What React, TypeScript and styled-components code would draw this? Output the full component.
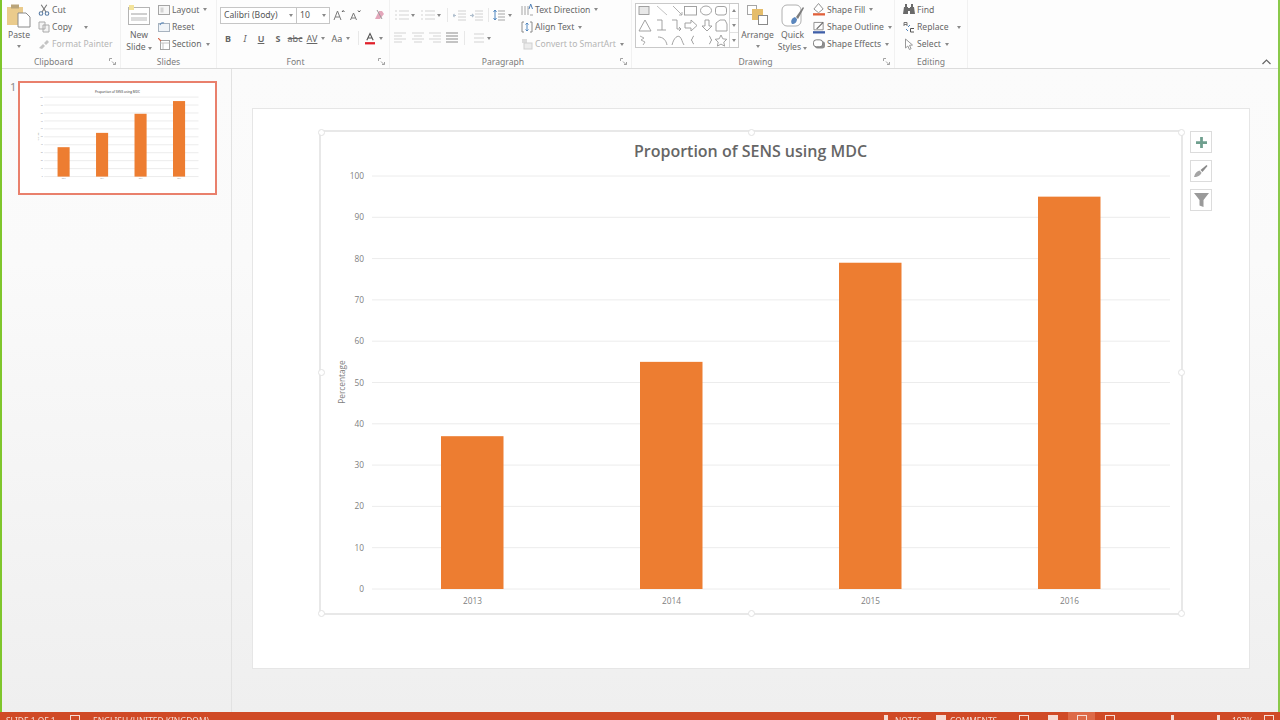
import React from "react";
import styled, { createGlobalStyle } from "styled-components";

const uiFont = '"Noto Sans", "Open Sans", sans-serif';

const GlobalStyle = createGlobalStyle`
  html, body {
    margin: 0;
    padding: 0;
    width: 1280px;
    height: 720px;
    overflow: hidden;
    background: #fff;
  }
  * { box-sizing: border-box; }
`;

const Shell = styled.div`
  width: 1280px;
  height: 720px;
  display: flex;
  flex-direction: column;
  overflow: hidden;
  font-family: ${uiFont};
  filter: blur(0.5px);
`;

const Framed = styled.div`
  height: 712px;
  display: flex;
  flex-direction: column;
  border-left: 2px solid #7fc62c;
  border-right: 2px solid #8ac94a;
`;

/* ---------- ribbon ---------- */

const Ribbon = styled.div`
  height: 69px;
  display: flex;
  flex: none;
  background: #fdfdfd;
  border-bottom: 1px solid #dcdcdc;
`;

const Group = styled.div<{ $w: number }>`
  width: ${(p) => p.$w}px;
  height: 68px;
  flex: none;
  display: flex;
  flex-direction: column;
  border-right: 1px solid #f1f1f1;
`;

const GroupBody = styled.div<{ $pl: number }>`
  height: 55px;
  display: flex;
  padding: 1px 0 0 ${(p) => p.$pl}px;
`;

const GroupLabel = styled.div`
  height: 13px;
  display: flex;
  align-items: center;
  font-size: 8.6px;
  color: #7b7b7b;
`;

const LabelText = styled.span`
  flex: 1;
  text-align: center;
`;

const Launcher = styled.svg`
  width: 7px;
  height: 7px;
  margin: 0 4px;
  flex: none;
`;

const RibbonTail = styled.div`
  flex: 1;
  display: flex;
  align-items: flex-end;
  justify-content: flex-end;
  padding: 0 7px 3px 0;
`;

const BigButton = styled.div<{ $w?: number }>`
  width: ${(p) => p.$w ?? 28}px;
  flex: none;
  display: flex;
  flex-direction: column;
  align-items: center;
  font-size: 8.6px;
  line-height: 12px;
  color: #666;
`;

const BigIcon = styled.div`
  height: 28px;
  display: flex;
  align-items: center;
  justify-content: center;
`;

const SmallStack = styled.div<{ $ml: number }>`
  margin-left: ${(p) => p.$ml}px;
  display: flex;
  flex-direction: column;
`;

const SmallRow = styled.div<{ $off?: boolean }>`
  height: 17.4px;
  display: flex;
  align-items: center;
  gap: 2px;
  font-size: 8.6px;
  white-space: nowrap;
  color: ${(p) => (p.$off ? "#b4b4b4" : "#666")};
`;

const SmallIcon = styled.span`
  width: 12px;
  height: 12px;
  flex: none;
  display: flex;
  align-items: center;
  justify-content: center;
`;

const Caret = styled.span<{ $ml?: number; $up?: boolean; $drop?: boolean }>`
  display: inline-block;
  flex: none;
  width: 0;
  height: 0;
  margin-left: ${(p) => p.$ml ?? 2}px;
  margin-top: ${(p) => (p.$drop ? 4 : 0)}px;
  border-left: 2.5px solid transparent;
  border-right: 2.5px solid transparent;
  border-top: 3px solid #8a8a8a;
  transform: ${(p) => (p.$up ? "rotate(180deg)" : "none")};
`;

const ToolRows = styled.div<{ $w?: number }>`
  ${(p) => (p.$w ? `width: ${p.$w}px;` : "")}
  flex: none;
  padding-top: 5px;
  display: flex;
  flex-direction: column;
  gap: 5px;
`;

const ToolRow = styled.div`
  height: 18px;
  display: flex;
  align-items: center;
`;

const ToolCell = styled.span<{ $w: number; $ml?: number; $weight?: number; $italic?: boolean; $under?: boolean; $strike?: boolean }>`
  width: ${(p) => p.$w}px;
  margin-left: ${(p) => p.$ml ?? 0}px;
  flex: none;
  display: flex;
  align-items: center;
  justify-content: center;
  font-size: 9px;
  font-weight: ${(p) => p.$weight ?? 400};
  font-style: ${(p) => (p.$italic ? "italic" : "normal")};
  text-decoration: ${(p) => (p.$under ? "underline" : p.$strike ? "line-through" : "none")};
  color: #666;
  white-space: nowrap;
`;

const Separator = styled.span<{ $ml: number }>`
  width: 1px;
  height: 14px;
  margin-left: ${(p) => p.$ml}px;
  flex: none;
  background: #e8e8e8;
`;

const ComboBox = styled.div<{ $w: number }>`
  width: ${(p) => p.$w}px;
  height: 17px;
  flex: none;
  display: flex;
  align-items: center;
  justify-content: space-between;
  padding: 0 3px;
  margin-right: -1px;
  background: #fff;
  border: 1px solid #c6c6c6;
  font-size: 8.6px;
  color: #555;
  white-space: nowrap;
`;

const Gallery = styled.div`
  width: 104px;
  height: 45px;
  margin: 2px 1px 0 0;
  flex: none;
  display: flex;
  background: #fff;
  border: 1px solid #c9c9c9;
`;

const GalleryScroll = styled.div`
  width: 9px;
  flex: none;
  display: flex;
  flex-direction: column;
  border-left: 1px solid #d6d6d6;
`;

const GalleryStep = styled.div`
  flex: 1;
  display: flex;
  align-items: center;
  justify-content: center;
  border-bottom: 1px solid #e2e2e2;
  &:last-child { border-bottom: 0; }
`;

/* ---------- workspace ---------- */

const Workspace = styled.div`
  flex: 1;
  display: flex;
  min-height: 0;
  background: linear-gradient(#fbfbfb, #fafafa 30%, #efefef);
`;

const SlidePanel = styled.div`
  width: 230px;
  flex: none;
  display: flex;
  align-items: flex-start;
  gap: 2px;
  padding: 12px 0 0 8px;
  border-right: 1px solid #e2e2e2;
`;

const SlideNumber = styled.span`
  width: 6px;
  font-size: 11px;
  line-height: 12px;
  color: #8e8e8e;
`;

const Thumb = styled.div`
  width: 199px;
  height: 114px;
  flex: none;
  background: #fff;
  border: 2px solid #e9806c;
  padding: 1px;
`;

const ThumbSvg = styled.svg`
  display: block;
  width: 100%;
  height: 100%;
`;

const Editor = styled.div`
  flex: 1;
  padding: 39px 28px 43px 20px;
  display: flex;
`;

const Slide = styled.div`
  flex: 1;
  display: flex;
  align-items: flex-start;
  gap: 7px;
  padding: 21px 0 0 66px;
  background: #fff;
  border: 1px solid #e6e6e6;
`;

const ChartFrame = styled.div`
  position: relative;
  width: 864px;
  height: 485px;
  flex: none;
  border: 2px solid #e8e8e8;
`;

const ChartSvg = styled.svg`
  display: block;
  width: 860px;
  height: 481px;
`;

const Handle = styled.span<{ $x: string; $y: string }>`
  position: absolute;
  left: ${(p) => p.$x};
  top: ${(p) => p.$y};
  width: 7px;
  height: 7px;
  margin: -3.5px 0 0 -3.5px;
  background: #fff;
  border: 1px solid #e2e2e2;
  border-radius: 50%;
`;

const ChartTools = styled.div`
  margin-top: 1px;
  display: flex;
  flex-direction: column;
  gap: 7px;
`;

const ChartTool = styled.div`
  width: 22px;
  height: 22px;
  display: flex;
  align-items: center;
  justify-content: center;
  background: #fff;
  border: 1px solid #dcdcdc;
`;

const ChartTitle = styled.text`
  font-family: "Open Sans", sans-serif;
  font-size: 16px;
  font-weight: 600;
  fill: #666;
  text-anchor: middle;
`;

const AxisText = styled.text<{ $anchor: string }>`
  font-family: "Open Sans", sans-serif;
  font-size: 8.3px;
  fill: #808080;
  text-anchor: ${(p) => p.$anchor};
`;

const GridLine = styled.line`
  stroke: #ececec;
  stroke-width: 1;
  vector-effect: non-scaling-stroke;
`;

const Bar = styled.rect`
  fill: #ed7d31;
`;

/* ---------- status bar ---------- */

const StatusBar = styled.div`
  height: 8px;
  flex: none;
  display: flex;
  overflow: hidden;
  background: #d04a26;
  padding-left: 6px;
`;

const StatusText = styled.span<{ $w: number; $ml?: number }>`
  width: ${(p) => p.$w}px;
  margin-left: ${(p) => p.$ml ?? 0}px;
  flex: none;
  padding-top: 3px;
  font-size: 8.4px;
  line-height: 11px;
  color: #f6dcd4;
  white-space: nowrap;
`;

const StatusBlock = styled.span<{ $w: number; $ml: number; $solid?: boolean }>`
  width: ${(p) => p.$w}px;
  height: 6px;
  margin: 3px 0 0 ${(p) => p.$ml}px;
  flex: none;
  background: ${(p) => (p.$solid ? "#f6dcd4" : "transparent")};
  border: 1px solid #f6dcd4;
`;

const StatusSpacer = styled.span<{ $w?: number }>`
  flex: ${(p) => (p.$w ? `0 0 ${p.$w}px` : "1")};
`;

const ActiveView = styled.span<{ $ml: number }>`
  width: 27px;
  margin-left: ${(p) => p.$ml}px;
  flex: none;
  display: flex;
  justify-content: center;
  background: #dd6a48;
`;

/* ---------- drawings ---------- */

const Launch = () => (
  <Launcher viewBox="0 0 7 7">
    <path d="M.5 3V.5H3M3 3.5l3 3M6.5 4v2.5H4" fill="none" stroke="#999" strokeWidth=".9" />
  </Launcher>
);

const PasteIcon = () => (
  <svg width="24" height="25" viewBox="0 0 24 25">
    <rect x="0" y="4" width="16" height="18" fill="#eacb8c" />
    <rect x="4" y="1.500" width="8" height="4" fill="#b9a47a" />
    <path d="M11 10h8l4 4v10H11z" fill="#fff" stroke="#8a8a8a" />
  </svg>
);

const CutIcon = () => (
  <svg width="12" height="12" viewBox="0 0 12 12" fill="none" stroke="#5a7da6" strokeWidth="1.1">
    <circle cx="3" cy="9.500" r="1.800" />
    <circle cx="9" cy="9.500" r="1.800" />
    <path d="M4 8 8.800.8M8 8 3.200.8" stroke="#777" />
  </svg>
);

const CopyIcon = () => (
  <svg width="12" height="12" viewBox="0 0 12 12" fill="#f4f4f4" stroke="#aaa">
    <path d="M1 1h6v7H1zM5 4h6v7H5z" />
  </svg>
);

const PainterIcon = () => (
  <svg width="12" height="12" viewBox="0 0 12 12">
    <path d="M1 10 5 6l2 2-3 3zM6 5l3-3 2 2-3 3z" fill="#c4c4c4" />
  </svg>
);

const NewSlideIcon = () => (
  <svg width="22" height="20" viewBox="0 0 22 20">
    <rect x=".5" y="2.500" width="21" height="17" fill="#fff" stroke="#b4b4b4" />
    <rect x="3" y="8" width="16" height="2" fill="#cfcfcf" />
    <rect x="3" y="12" width="16" height="4" fill="#dcdcdc" />
    <path d="M1 0h5v5H1z" fill="#f3e39a" />
  </svg>
);

const LayoutIcon = () => (
  <svg width="12" height="12" viewBox="0 0 12 12">
    <rect x=".5" y="1.500" width="11" height="9" fill="#f6f6f6" stroke="#a5a5a5" />
    <rect x="2.500" y="3.500" width="3" height="5" fill="#d4d4d4" />
  </svg>
);

const ResetIcon = () => (
  <svg width="12" height="12" viewBox="0 0 12 12">
    <rect x=".5" y="2.500" width="11" height="8" fill="#f0f4f8" stroke="#a8b3bf" />
    <path d="M2 4a3 3 0 0 1 4-2" fill="none" stroke="#6a92bd" strokeWidth="1.200" />
  </svg>
);

const SectionIcon = () => (
  <svg width="12" height="12" viewBox="0 0 12 12">
    <rect x="2.500" y="2.500" width="9" height="9" fill="#fff" stroke="#a5a5a5" />
    <path d="M2.500 5h9M5 5v6" stroke="#c4c4c4" />
    <path d="M0 0l3 3" stroke="#d5694d" strokeWidth="1.200" />
  </svg>
);

const ListIcon = ({ dots = true }: { dots?: boolean }) => (
  <svg width="14" height="12" viewBox="0 0 14 12" stroke="#d4d4d4" strokeWidth="1.200">
    {dots && <path d="M0 2h2M0 6h2M0 10h2" />}
    <path d="M4 2h10M4 6h10M4 10h10" />
  </svg>
);

const IndentIcon = ({ flip }: { flip?: boolean }) => (
  <svg width="13" height="11" viewBox="0 0 13 11" stroke="#d2d2d2" strokeWidth="1.100" fill="none">
    <path d="M5 1h8M5 4h8M5 7h8M5 10h8" />
    <path d={flip ? "M0 5.500h3M2 4l1.500 1.500L2 7" : "M3 5.500H0M1.500 4 0 5.500 1.500 7"} stroke="#b0bfce" />
  </svg>
);

const SpacingIcon = () => (
  <svg width="12" height="12" viewBox="0 0 12 12" fill="none">
    <path d="M2 1v10M.5 3 2 1l1.500 2M.5 9 2 11l1.500-2" stroke="#4f86c0" />
    <path d="M5 2h7M5 5h7M5 8h7M5 11h7" stroke="#a5a5a5" />
  </svg>
);

const AlignIcon = ({ kind }: { kind: "l" | "c" | "r" | "j" }) => {
  const tone = kind === "j" ? "#8c8c8c" : "#d4d4d4";
  const short = { l: "M0 4h8M0 10h8", c: "M2 4h8M2 10h8", r: "M4 4h8M4 10h8", j: "M0 4h12M0 10h12" }[kind];
  return (
    <svg width="12" height="12" viewBox="0 0 12 12" stroke={tone} strokeWidth="1.100">
      <path d={`M0 1h12M0 7h12${short}`} />
    </svg>
  );
};

const TextDirectionIcon = () => (
  <svg width="12" height="13" viewBox="0 0 12 13" fill="none">
    <path d="M1 3v9M4 3v9M7 3v9" stroke="#a5a5a5" />
    <path d="M8 6l1.700-5L11.500 6" stroke="#4f7fb5" />
    <path d="M9 12h3" stroke="#a5a5a5" />
  </svg>
);

const AlignTextIcon = () => (
  <svg width="12" height="12" viewBox="0 0 12 12" fill="none">
    <path d="M3 1H1v10h2M9 1h2v10H9" stroke="#8c8c8c" />
    <path d="M6 2v8M4.500 3.500 6 2l1.500 1.500M4.500 8.500 6 10l1.500-1.500" stroke="#4f86c0" />
  </svg>
);

const SmartArtIcon = () => (
  <svg width="12" height="12" viewBox="0 0 12 12">
    <rect x="1" y="1" width="5" height="4" fill="#dcdcdc" />
    <rect x="3" y="5" width="8" height="6" fill="#ececec" stroke="#d0d0d0" />
  </svg>
);

const ShapeGallery = () => (
  <svg width="93" height="43" viewBox="0 0 93 43" fill="none" stroke="#999" strokeWidth=".9">
    <rect x="3" y="2.500" width="10" height="8" fill="#e8e8e8" />
    <path d="M21 2l10 9" stroke="#bcbcbc" />
    <path d="M37 2l9 9M43 11h3V8" stroke="#a8a8a8" />
    <rect x="48.500" y="2.500" width="12" height="8.500" />
    <ellipse cx="70" cy="6.500" rx="5.500" ry="4.500" />
    <rect x="79.500" y="2.500" width="11" height="8.500" rx="2.500" />
    <path d="M3 27 9 16l6 11zM21 16h5v10M21 26h9M36 16h5v9h4M43 23l2 2-2 2" />
    <path d="M49 19h6v-3l6 5.500-6 5.500v-3h-6zM69 16h4v6h3l-5 5-5-5h3zM80 27v-8l4-3h5l2 4v7z" />
    <path d="M4 32l4 2-3 2 4 2-2 3" stroke="#a5a5a5" />
    <path d="M22 33c5 0 8 3 9 8M36 41c2-8 6-10 8-8s2 5 4 8M58 32c-2 0-1 4-3 4 2 0 1 4 3 4M73 32c2 0 1 4 3 4-2 0-1 4-3 4" />
    <path d="M85 31l1.800 3.800 4 .5-3 2.800.8 4-3.600-2-3.600 2 .8-4-3-2.800 4-.5z" />
  </svg>
);

const ArrangeIcon = () => (
  <svg width="21" height="20" viewBox="0 0 21 20">
    <rect x=".5" y=".5" width="9" height="9" fill="#fff" stroke="#a5a5a5" />
    <rect x="5" y="4" width="11" height="11" fill="#e5bd6a" />
    <rect x="11.500" y="10.500" width="9" height="9" fill="#fff" stroke="#8a8a8a" />
  </svg>
);

const QuickStylesIcon = () => (
  <svg width="24" height="24" viewBox="0 0 24 24" fill="none">
    <rect x="1" y="2" width="19" height="21" rx="5" fill="#fff" stroke="#b0b0b0" />
    <path d="M11 21c-2-3 0-6 3-7l2 2c0 3-2 5-5 5z" fill="#5a86bd" />
    <path d="M15 14 22 4l1 1-6 11z" fill="#7d7d7d" />
  </svg>
);

const ShapeFillIcon = () => (
  <svg width="13" height="13" viewBox="0 0 13 13">
    <path d="M6 0 11 6 6 10 1 6z" fill="#fff" stroke="#8a8a8a" />
    <rect x="0" y="10.500" width="13" height="2.500" fill="#e0603a" />
  </svg>
);

const ShapeOutlineIcon = () => (
  <svg width="13" height="13" viewBox="0 0 13 13" fill="none">
    <path d="M1 1h10v8H1z" stroke="#8a8a8a" />
    <path d="M4 8l7-7" stroke="#666" strokeWidth="1.300" />
    <rect x="0" y="10.500" width="13" height="2.500" fill="#3f5fa8" />
  </svg>
);

const ShapeEffectsIcon = () => (
  <svg width="13" height="12" viewBox="0 0 13 12">
    <rect x="2" y="3" width="11" height="8" rx="3" fill="#8f8f8f" />
    <rect x=".5" y="1.500" width="10" height="7.500" rx="3" fill="#fff" stroke="#777" />
  </svg>
);

const FindIcon = () => (
  <svg width="12" height="11" viewBox="0 0 12 11" fill="#6a6a6a">
    <path d="M1 3h4v7H0zM7 3h4l1 7H7zM5 4h2v3H5zM2 0h2v3H2zM8 0h2v3H8z" />
  </svg>
);

const ReplaceIcon = () => (
  <svg width="12" height="12" viewBox="0 0 12 12" fill="none" stroke="#777">
    <path d="M1 5V1.500h3V5M1 3.500h3" />
    <path d="M11 7.500H7.500v3.500H11" stroke="#555" />
    <path d="M5 6 7 4M3 8l2 2" stroke="#4f86c0" />
  </svg>
);

const SelectIcon = () => (
  <svg width="10" height="12" viewBox="0 0 10 12" fill="#fff" stroke="#999">
    <path d="M1.500 1v9l2.300-2 1.600 3.500 1.700-.8L5.500 7.300 8.500 7z" />
  </svg>
);

const FontSizeIcon = ({ small }: { small?: boolean }) => (
  <svg width="12" height="12" viewBox="0 0 12 12" fill="none" stroke="#7a7a7a">
    <path d={small ? "M1.500 11 4.500 4l3 7M2.500 9h4" : "M1 11 4.500 2 8 11M2.300 8h4.400"} />
    <path d={small ? "M9 1.500l1.200 1.500L11.400 1.500" : "M9 3l1.200-1.500L11.400 3"} stroke="#555" />
  </svg>
);

const ClearFormatIcon = () => (
  <svg width="13" height="12" viewBox="0 0 13 12">
    <path d="M2 10 6 2h3l2 3-4 5z" fill="#e4a7bb" />
    <path d="M4 1l5 9" stroke="#9a9a9a" />
  </svg>
);

const FontColorIcon = () => (
  <svg width="11" height="13" viewBox="0 0 11 13" fill="none">
    <path d="M2 8.500 5.500 1 9 8.500M3.200 6h4.600" stroke="#555" strokeWidth="1.200" />
    <rect x="0" y="10.500" width="11" height="2.500" fill="#e0202a" />
  </svg>
);

const PlusIcon = () => (
  <svg width="11" height="11" viewBox="0 0 12 12">
    <path d="M4.500 0h3v4.500H12v3H7.500V12h-3V7.500H0v-3h4.500z" fill="#6f9f8e" />
  </svg>
);

const BrushIcon = () => (
  <svg width="14" height="14" viewBox="0 0 14 14">
    <path d="M0 13c1-4 3-6 5.500-6.500L7.500 8.500C7 11 4 13 0 13z" fill="#a5a5a5" />
    <path d="M6.500 6 12.500 1l1 1-5 6z" fill="#8a8a8a" />
  </svg>
);

const FunnelIcon = () => (
  <svg width="15" height="14" viewBox="0 0 15 14">
    <path d="M0 0h15L9.500 7v7l-4-1.500V7z" fill="#9a9a9a" />
  </svg>
);

const ChevronUp = () => (
  <svg width="9" height="6" viewBox="0 0 9 6" fill="none" stroke="#666" strokeWidth="1.200">
    <path d="M.5 5 4.500 1l4 4" />
  </svg>
);

/* ---------- chart ---------- */

const bars = [
  { year: "2013", value: 37, x: 441 },
  { year: "2014", value: 55, x: 640 },
  { year: "2015", value: 79, x: 839 },
  { year: "2016", value: 95, x: 1038 },
];
const ticks = [100, 90, 80, 70, 60, 50, 40, 30, 20, 10, 0];
const valueY = (v: number) => 589 - v * 4.13;

// drawn in page coordinates, the two viewBoxes below do the scaling
const ChartGraphic = () => (
  <>
    <ChartTitle x={750.5} y={157}>Proportion of SENS using MDC</ChartTitle>
    {ticks.map((t) => (
      <g key={t}>
        <GridLine x1={372} x2={1170} y1={valueY(t)} y2={valueY(t)} />
        <AxisText $anchor="end" x={364} y={valueY(t) + 3}>{t}</AxisText>
      </g>
    ))}
    {bars.map((b) => (
      <g key={b.year}>
        <Bar x={b.x} y={valueY(b.value)} width={62.5} height={b.value * 4.13} />
        <AxisText $anchor="middle" x={b.x + 31.5} y={604}>{b.year}</AxisText>
      </g>
    ))}
    <AxisText $anchor="middle" transform="translate(344.500 382) rotate(-90)">Percentage</AxisText>
  </>
);

const handleSpots: [string, string][] = [
  ["0%", "0%"], ["50%", "0%"], ["100%", "0%"],
  ["0%", "50%"], ["100%", "50%"],
  ["0%", "100%"], ["50%", "100%"], ["100%", "100%"],
];

export default function App() {
  return (
    <>
      <GlobalStyle />
      <Shell>
        <Framed>
          <Ribbon>
            <Group $w={119}>
              <GroupBody $pl={3}>
                <BigButton>
                  <BigIcon><PasteIcon /></BigIcon>
                  Paste
                  <Caret $ml={0} $drop />
                </BigButton>
                <SmallStack $ml={5}>
                  <SmallRow><SmallIcon><CutIcon /></SmallIcon>Cut</SmallRow>
                  <SmallRow><SmallIcon><CopyIcon /></SmallIcon>Copy<Caret $ml={10} /></SmallRow>
                  <SmallRow $off><SmallIcon><PainterIcon /></SmallIcon>Format Painter</SmallRow>
                </SmallStack>
              </GroupBody>
              <GroupLabel><LabelText>Clipboard</LabelText><Launch /></GroupLabel>
            </Group>

            <Group $w={96}>
              <GroupBody $pl={4}>
                <BigButton>
                  <BigIcon><NewSlideIcon /></BigIcon>
                  New
                  <span>Slide <Caret $ml={0} /></span>
                </BigButton>
                <SmallStack $ml={5}>
                  <SmallRow><SmallIcon><LayoutIcon /></SmallIcon>Layout<Caret /></SmallRow>
                  <SmallRow><SmallIcon><ResetIcon /></SmallIcon>Reset</SmallRow>
                  <SmallRow><SmallIcon><SectionIcon /></SmallIcon>Section<Caret /></SmallRow>
                </SmallStack>
              </GroupBody>
              <GroupLabel><LabelText>Slides</LabelText></GroupLabel>
            </Group>

            <Group $w={173}>
              <GroupBody $pl={3}>
                <ToolRows>
                  <ToolRow>
                    <ComboBox $w={77}>Calibri (Body)<Caret /></ComboBox>
                    <ComboBox $w={34}>10<Caret /></ComboBox>
                    <ToolCell $w={20}><FontSizeIcon /></ToolCell>
                    <ToolCell $w={12}><FontSizeIcon small /></ToolCell>
                    <ToolCell $w={14} $ml={11}><ClearFormatIcon /></ToolCell>
                  </ToolRow>
                  <ToolRow>
                    <ToolCell $w={16} $weight={700}>B</ToolCell>
                    <ToolCell $w={18} $italic>I</ToolCell>
                    <ToolCell $w={14} $under $weight={600}>U</ToolCell>
                    <ToolCell $w={20} $weight={700}>S</ToolCell>
                    <ToolCell $w={14} $strike>abc</ToolCell>
                    <ToolCell $w={12} $ml={4} $under>AV</ToolCell>
                    <ToolCell $w={6} $ml={2}><Caret $ml={0} /></ToolCell>
                    <ToolCell $w={12} $ml={5}>Aa</ToolCell>
                    <ToolCell $w={6} $ml={2}><Caret $ml={0} /></ToolCell>
                    <Separator $ml={7} />
                    <ToolCell $w={10} $ml={6}><FontColorIcon /></ToolCell>
                    <ToolCell $w={6} $ml={3}><Caret $ml={0} /></ToolCell>
                  </ToolRow>
                </ToolRows>
              </GroupBody>
              <GroupLabel><LabelText>Font</LabelText><Launch /></GroupLabel>
            </Group>

            <Group $w={242}>
              <GroupBody $pl={4}>
                <ToolRows $w={127}>
                  <ToolRow>
                    <ToolCell $w={14} $ml={1}><ListIcon /></ToolCell>
                    <ToolCell $w={6} $ml={1}><Caret $ml={0} /></ToolCell>
                    <ToolCell $w={14} $ml={5}><ListIcon /></ToolCell>
                    <ToolCell $w={6} $ml={1}><Caret $ml={0} /></ToolCell>
                    <Separator $ml={5} />
                    <ToolCell $w={13} $ml={5}><IndentIcon /></ToolCell>
                    <ToolCell $w={13} $ml={4}><IndentIcon flip /></ToolCell>
                    <Separator $ml={5} />
                    <ToolCell $w={12} $ml={4}><SpacingIcon /></ToolCell>
                    <ToolCell $w={6} $ml={2}><Caret $ml={0} /></ToolCell>
                  </ToolRow>
                  <ToolRow>
                    <ToolCell $w={12}><AlignIcon kind="l" /></ToolCell>
                    <ToolCell $w={12} $ml={6}><AlignIcon kind="c" /></ToolCell>
                    <ToolCell $w={12} $ml={5}><AlignIcon kind="r" /></ToolCell>
                    <ToolCell $w={12} $ml={5}><AlignIcon kind="j" /></ToolCell>
                    <Separator $ml={6} />
                    <ToolCell $w={14} $ml={5}><ListIcon dots={false} /></ToolCell>
                    <ToolCell $w={6} $ml={2}><Caret $ml={0} /></ToolCell>
                  </ToolRow>
                </ToolRows>
                <SmallStack $ml={0}>
                  <SmallRow><SmallIcon><TextDirectionIcon /></SmallIcon>Text Direction<Caret /></SmallRow>
                  <SmallRow><SmallIcon><AlignTextIcon /></SmallIcon>Align Text<Caret /></SmallRow>
                  <SmallRow $off><SmallIcon><SmartArtIcon /></SmallIcon>Convert to SmartArt<Caret /></SmallRow>
                </SmallStack>
              </GroupBody>
              <GroupLabel><LabelText>Paragraph</LabelText><Launch /></GroupLabel>
            </Group>

            <Group $w={263}>
              <GroupBody $pl={3}>
                <Gallery>
                  <ShapeGallery />
                  <GalleryScroll>
                    <GalleryStep><Caret $ml={0} $up /></GalleryStep>
                    <GalleryStep><Caret $ml={0} /></GalleryStep>
                    <GalleryStep><Caret $ml={0} /></GalleryStep>
                  </GalleryScroll>
                </Gallery>
                <BigButton $w={35}>
                  <BigIcon><ArrangeIcon /></BigIcon>
                  Arrange
                  <Caret $ml={0} $drop />
                </BigButton>
                <BigButton $w={35}>
                  <BigIcon><QuickStylesIcon /></BigIcon>
                  Quick
                  <span>Styles <Caret $ml={0} /></span>
                </BigButton>
                <SmallStack $ml={3}>
                  <SmallRow><SmallIcon><ShapeFillIcon /></SmallIcon>Shape Fill<Caret /></SmallRow>
                  <SmallRow><SmallIcon><ShapeOutlineIcon /></SmallIcon>Shape Outline<Caret /></SmallRow>
                  <SmallRow><SmallIcon><ShapeEffectsIcon /></SmallIcon>Shape Effects<Caret /></SmallRow>
                </SmallStack>
              </GroupBody>
              <GroupLabel><LabelText>Drawing</LabelText><Launch /></GroupLabel>
            </Group>

            <Group $w={73}>
              <GroupBody $pl={8}>
                <SmallStack $ml={0}>
                  <SmallRow><SmallIcon><FindIcon /></SmallIcon>Find</SmallRow>
                  <SmallRow><SmallIcon><ReplaceIcon /></SmallIcon>Replace<Caret $ml={6} /></SmallRow>
                  <SmallRow><SmallIcon><SelectIcon /></SmallIcon>Select<Caret /></SmallRow>
                </SmallStack>
              </GroupBody>
              <GroupLabel><LabelText>Editing</LabelText></GroupLabel>
            </Group>

            <RibbonTail><ChevronUp /></RibbonTail>
          </Ribbon>

          <Workspace>
            <SlidePanel>
              <SlideNumber>1</SlideNumber>
              <Thumb>
                <ThumbSvg viewBox="252 108 998 561" preserveAspectRatio="none">
                  <ChartGraphic />
                </ThumbSvg>
              </Thumb>
            </SlidePanel>
            <Editor>
              <Slide>
                <ChartFrame>
                  <ChartSvg viewBox="321 132 860 481">
                    <ChartGraphic />
                  </ChartSvg>
                  {handleSpots.map(([x, y]) => (
                    <Handle key={x + y} $x={x} $y={y} />
                  ))}
                </ChartFrame>
                <ChartTools>
                  <ChartTool><PlusIcon /></ChartTool>
                  <ChartTool><BrushIcon /></ChartTool>
                  <ChartTool><FunnelIcon /></ChartTool>
                </ChartTools>
              </Slide>
            </Editor>
          </Workspace>
        </Framed>

        <StatusBar>
          <StatusText $w={47}>SLIDE 1 OF 1</StatusText>
          <StatusBlock $w={10} $ml={17} />
          <StatusText $w={112} $ml={13}>ENGLISH (UNITED KINGDOM)</StatusText>
          <StatusSpacer />
          <StatusBlock $w={4} $ml={0} $solid />
          <StatusText $w={26} $ml={7}>NOTES</StatusText>
          <StatusBlock $w={10} $ml={15} $solid />
          <StatusText $w={46} $ml={4}>COMMENTS</StatusText>
          <StatusBlock $w={10} $ml={23} />
          <StatusBlock $w={10} $ml={19} $solid />
          <ActiveView $ml={10}><StatusBlock $w={10} $ml={0} /></ActiveView>
          <StatusBlock $w={10} $ml={10} />
          <StatusBlock $w={3} $ml={56} $solid />
          <StatusBlock $w={3} $ml={43} $solid />
          <StatusText $w={20} $ml={12}>107%</StatusText>
          <StatusBlock $w={10} $ml={12} />
          <StatusSpacer $w={6} />
        </StatusBar>
      </Shell>
    </>
  );
}
